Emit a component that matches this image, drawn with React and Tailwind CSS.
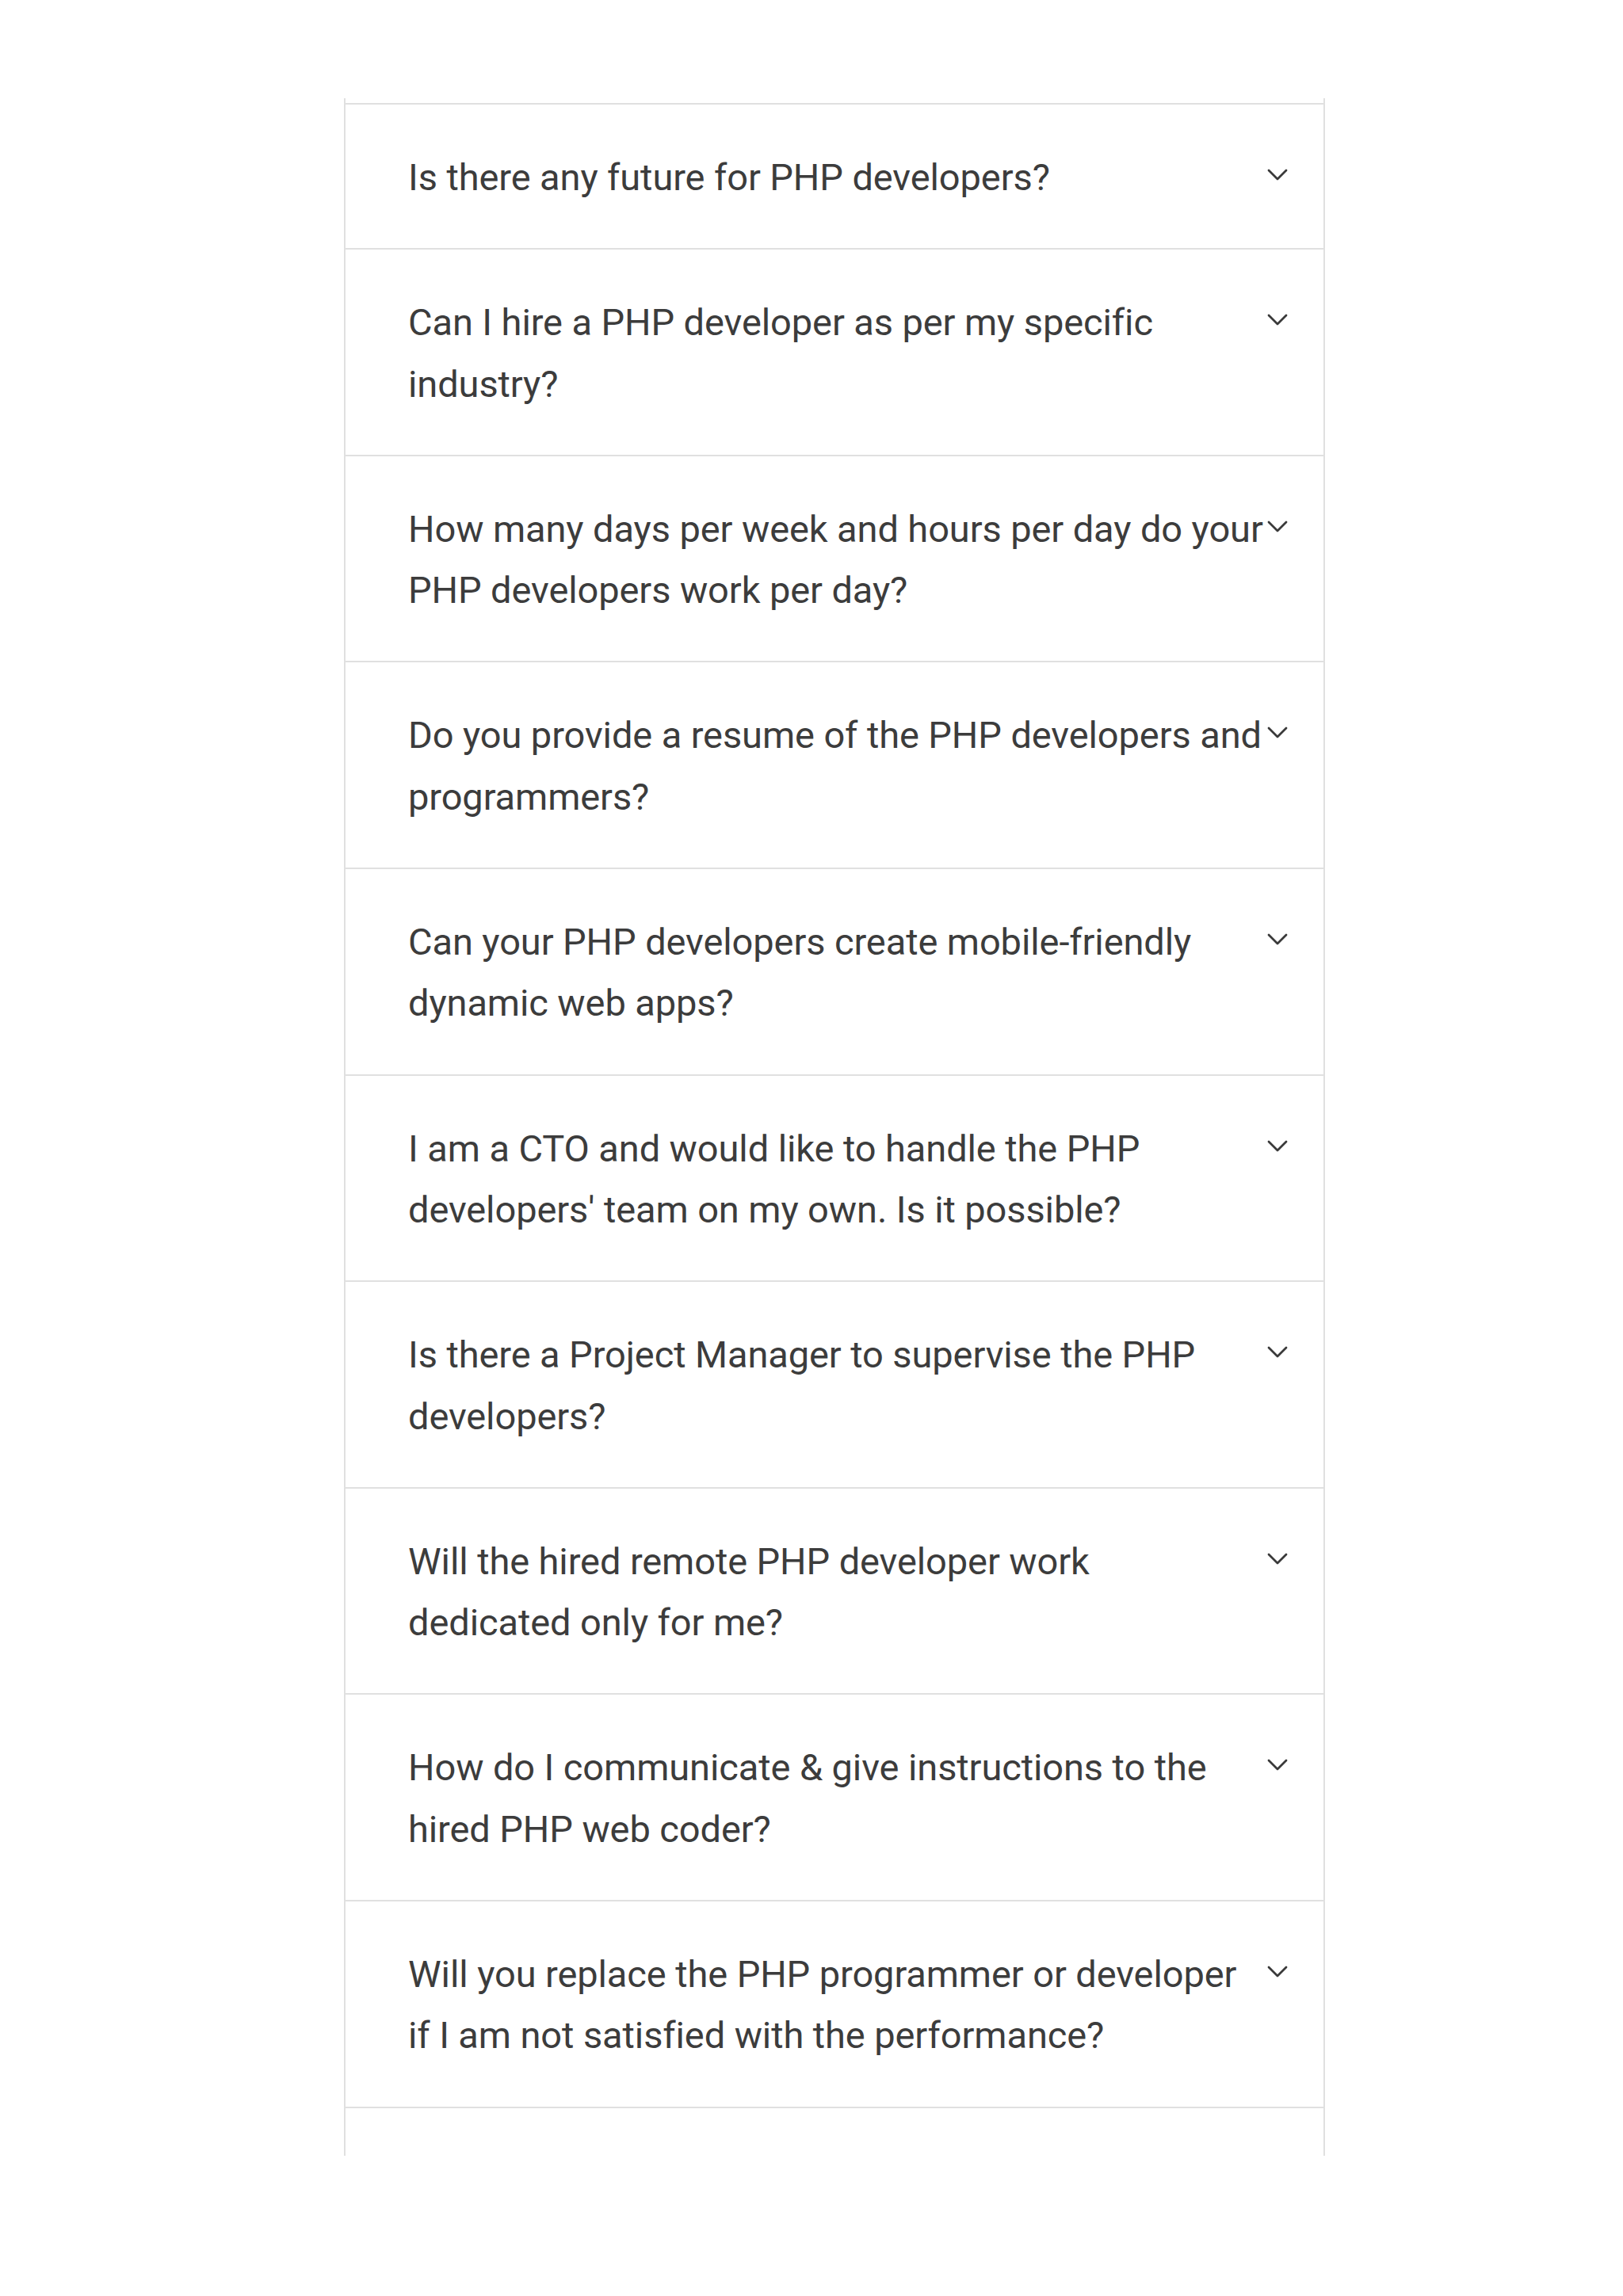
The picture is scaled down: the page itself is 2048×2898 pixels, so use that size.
const faqs = [
  ["Is there any future for PHP developers?"],
  ["Can I hire a PHP developer as per my specific", "industry?"],
  ["How many days per week and hours per day do your", "PHP developers work per day?"],
  ["Do you provide a resume of the PHP developers and", "programmers?"],
  ["Can your PHP developers create mobile-friendly", "dynamic web apps?"],
  ["I am a CTO and would like to handle the PHP", "developers' team on my own. Is it possible?"],
  ["Is there a Project Manager to supervise the PHP", "developers?"],
  ["Will the hired remote PHP developer work", "dedicated only for me?"],
  ["How do I communicate & give instructions to the", "hired PHP web coder?"],
  ["Will you replace the PHP programmer or developer", "if I am not satisfied with the performance?"],
];

function Chevron() {
  return (
    <svg width="26" height="16" viewBox="0 0 26 16" fill="none" className="shrink-0 mt-[28px]">
      <polyline points="2,2 13,13 24,2" stroke="#3a3a3a" strokeWidth="2.8" strokeLinecap="round" strokeLinejoin="round" />
    </svg>
  );
}

export default function App() {
  return (
    <div className="bg-white min-h-[2898px] pt-[124px] font-['Roboto',sans-serif]">
      <div className="ml-[434px] w-[1238px] h-[2597px] overflow-hidden border-x-2 border-[#e0e0e0] pt-[6px]">
        {faqs.map((lines, i) => (
          <div
            key={i}
            className="flex items-start gap-[4px] border-t-2 border-[#e0e0e0] pl-[79px] pr-[45px] pt-[53px] pb-[51px]"
          >
            <div className="flex-1 min-w-0 text-[47px] leading-[77.3px] text-[#3c3c3c] tracking-[-0.1px]">
              {lines.map((l, j) => (
                <div key={j} className="whitespace-nowrap">{l}</div>
              ))}
            </div>
            <Chevron />
          </div>
        ))}
        <div className="border-t-2 border-[#e0e0e0] h-[80px]"></div>
      </div>
    </div>
  );
}
